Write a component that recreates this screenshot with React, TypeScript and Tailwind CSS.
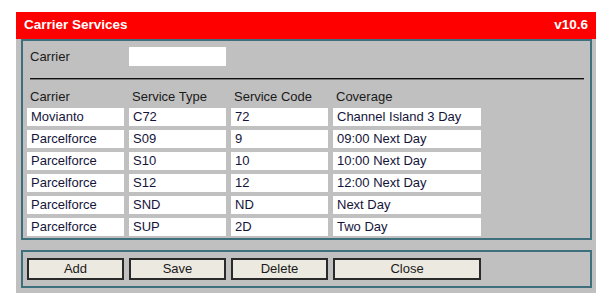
import React from "react";

const rows = [
  ["Movianto", "C72", "72", "Channel Island 3 Day"],
  ["Parcelforce", "S09", "9", "09:00 Next Day"],
  ["Parcelforce", "S10", "10", "10:00 Next Day"],
  ["Parcelforce", "S12", "12", "12:00 Next Day"],
  ["Parcelforce", "SND", "ND", "Next Day"],
  ["Parcelforce", "SUP", "2D", "Two Day"],
];

const grid = "grid grid-cols-[97px_97px_97px_148px] gap-x-[5px]";

export default function App() {
  return (
    <div className="w-[609px] h-[301px] bg-white pt-[12px] pl-[16px]" style={{ fontFamily: '"Liberation Sans", Arial, sans-serif' }}>
      <div className="w-[580px] bg-[#c0c0c0] pb-[5px]">
        <div className="h-[27px] bg-[#ff0000] flex items-center justify-between pl-[8px] pr-[8px] text-white font-bold text-[13.5px]">
          <span>Carrier Services</span>
          <span>v10.6</span>
        </div>
        <div className="ml-[5px] mr-[4px]">
          <div className="border-2 border-[#3e6f7d] pt-[6px] pb-[2px] pl-[4px] text-[13px] text-[#1a1a1a]">
            <div className={grid}>
              <div className="h-[19px] flex items-center pl-[3px]">Carrier</div>
              <div className="h-[19px] bg-white" />
            </div>
            <div className="mt-[12px] ml-[3px] mr-[6px]">
              <div className="h-px bg-[#111]" />
              <div className="h-px bg-[#7a7a7a]" />
            </div>
            <div className={grid + " mt-[8px]"}>
              {["Carrier", "Service Type", "Service Code", "Coverage"].map((h) => (
                <div key={h} className="h-[18px] flex items-center pl-[3px]">{h}</div>
              ))}
            </div>
            <div className="flex flex-col gap-[4px] mt-[2px]">
              {rows.map((r, i) => (
                <div key={i} className={grid}>
                  {r.map((c, j) => (
                    <div key={j} className="h-[18px] bg-white flex items-center pl-[4px] text-[#14143a] whitespace-nowrap">
                      {c}
                    </div>
                  ))}
                </div>
              ))}
            </div>
          </div>
          <div className="mt-[10px] border-2 border-[#3e6f7d] pt-[6px] pb-[6px] pl-[4px]">
            <div className={grid}>
              {["Add", "Save", "Delete", "Close"].map((b) => (
                <button
                  key={b}
                  className="h-[22px] bg-[#ece9e0] border-2 border-[#2a2a2a] text-[13px] text-[#1a1a1a] flex items-center justify-center"
                >
                  {b}
                </button>
              ))}
            </div>
          </div>
        </div>
      </div>
    </div>
  );
}
